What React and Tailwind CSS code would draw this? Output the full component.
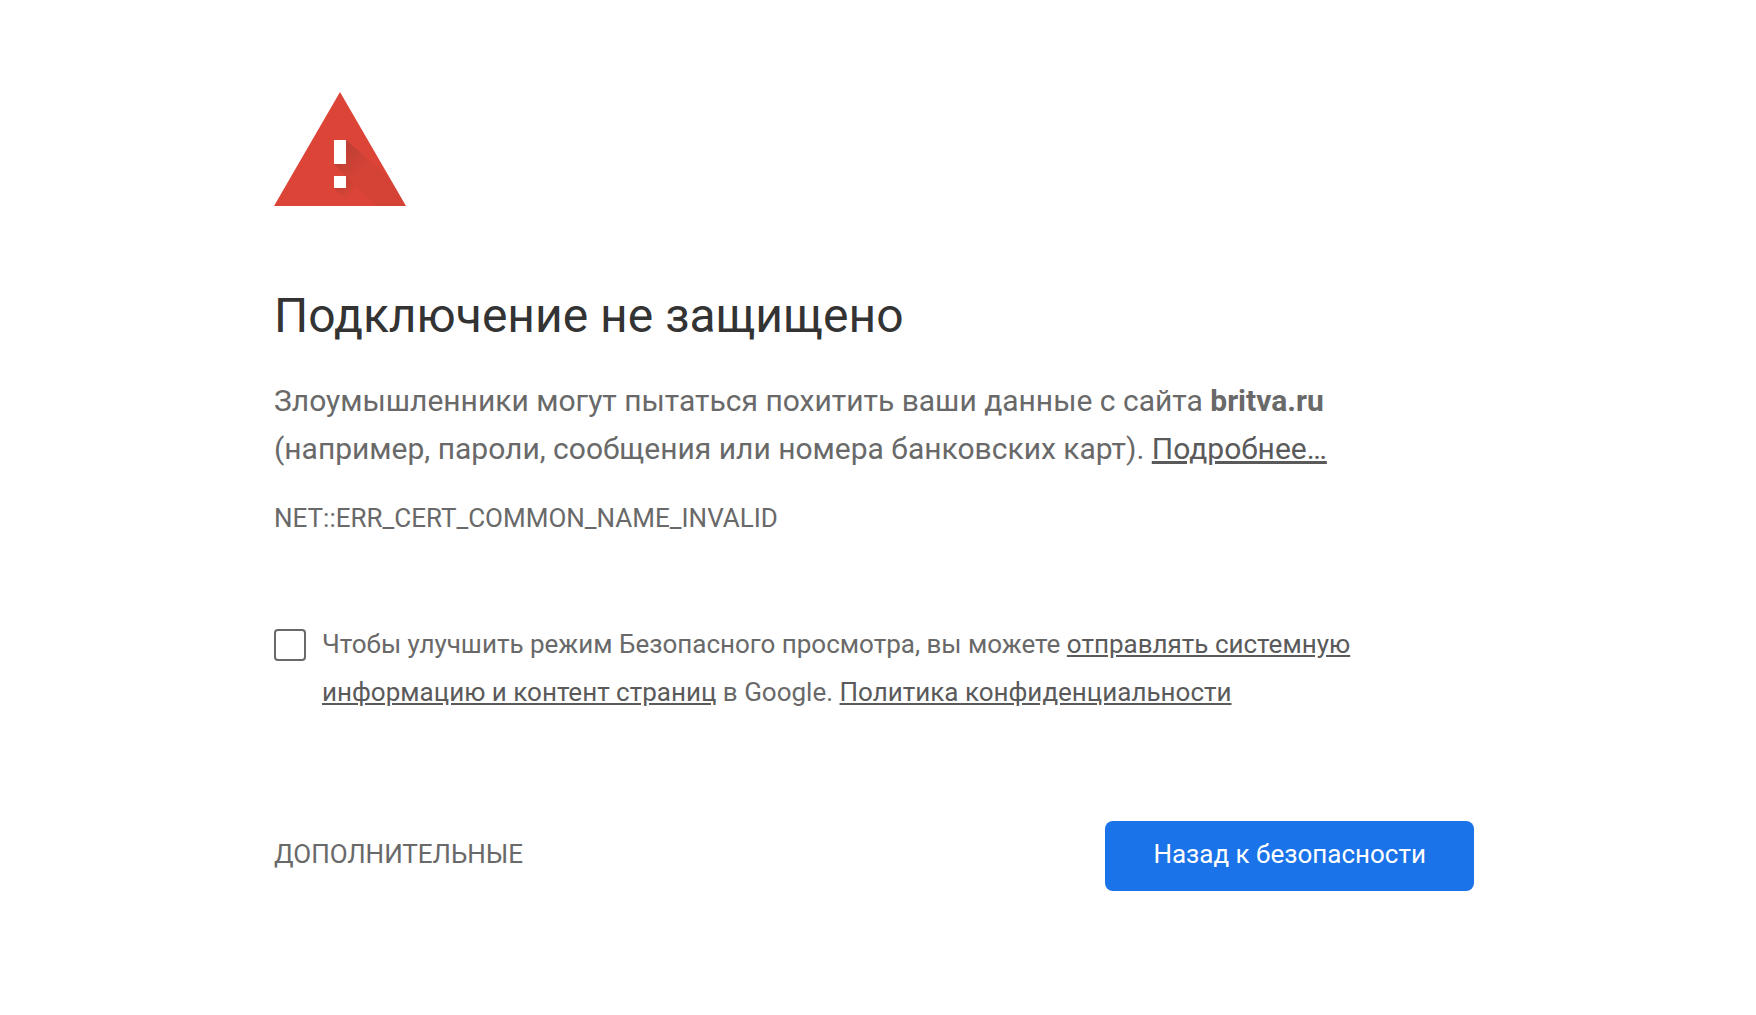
export default function App() {
  return (
    <div className="w-full bg-white pr-2">
      <main className="mx-auto w-full max-w-[1200px] pt-[92px] pb-12 text-[26px] leading-12 text-[#696969] font-[Roboto,sans-serif]">
        <svg viewBox="0 0 132 114" className="h-[114px] w-[132px]" aria-hidden="true">
          <defs>
            <linearGradient id="shade" gradientUnits="userSpaceOnUse" x1="66" y1="56" x2="88" y2="78">
              <stop offset="0" stopColor="#3e2723" stopOpacity="0.2" />
              <stop offset="1" stopColor="#3e2723" stopOpacity="0.04" />
            </linearGradient>
            <linearGradient id="dotShade" gradientUnits="userSpaceOnUse" x1="66" y1="90" x2="78" y2="102">
              <stop offset="0" stopColor="#3e2723" stopOpacity="0.16" />
              <stop offset="1" stopColor="#3e2723" stopOpacity="0" />
            </linearGradient>
          </defs>
          <path fill="#db4437" d="M66 0 132 114H0Z" />
          <path fill="url(#shade)" d="M72 48 116 86 132 114H102L60 72Z" />
          <path fill="url(#dotShade)" d="M72 84 102 114H78L60 96Z" />
          <path fill="#fff" d="M60 48h12v24H60zM60 84h12v12H60z" />
        </svg>
        <h1 className="mt-20 text-[48px] leading-[60px] text-[#333]">Подключение не защищено</h1>
        <p className="mt-[31px] text-[30px]">
          Злоумышленники могут пытаться похитить ваши данные с сайта <strong className="font-bold">britva.ru</strong> (например, пароли, сообщения или номера банковских карт).{' '}
          <a href="#" className="text-[#5a5a5a] underline">Подробнее…</a>
        </p>
        <p className="mt-[21px]">NET::ERR_CERT_COMMON_NAME_INVALID</p>
        <div className="mt-[78px] flex gap-4">
          <input id="optin" type="checkbox" className="mt-[9px] size-8 shrink-0 appearance-none rounded border-2 border-[#696969] bg-white" />
          <label htmlFor="optin">
            Чтобы улучшить режим Безопасного просмотра, вы можете <a href="#" className="text-[#5a5a5a] underline">отправлять системную информацию и контент страниц</a> в Google.{' '}
            <a href="#" className="text-[#5a5a5a] underline">Политика конфиденциальности</a>
          </label>
        </div>
        <div className="mt-[105px] flex items-center justify-between">
          <button type="button" className="h-[70px] pb-1">ДОПОЛНИТЕЛЬНЫЕ</button>
          <button type="button" className="h-[70px] rounded-lg bg-[#1a73e8] px-12 pb-1 text-white">Назад к безопасности</button>
        </div>
      </main>
    </div>
  );
}
